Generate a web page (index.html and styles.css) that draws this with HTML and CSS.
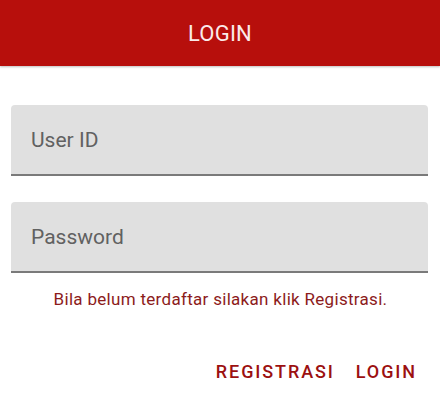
FILE: index.html
```html
<!DOCTYPE html>
<html>
<head>
<meta charset="utf-8">
<link rel="stylesheet" href="styles.css">
</head>
<body>
<div class="app">
  <header class="toolbar"><span class="title">LOGIN</span></header>
  <main class="content">
    <div class="field"><span class="placeholder">User ID</span></div>
    <div class="field"><span class="placeholder">Password</span></div>
    <p class="hint">Bila belum terdaftar silakan klik Registrasi.</p>
    <div class="actions">
      <button class="btn">REGISTRASI</button>
      <button class="btn">LOGIN</button>
    </div>
  </main>
</div>
</body>
</html>
```
FILE: styles.css
```css
* { box-sizing: border-box; }
html, body { margin: 0; padding: 0; background: #fff; }
body { font-family: Roboto, "Noto Sans", sans-serif; width: 440px; height: 403px; overflow: hidden; }
.toolbar {
  height: 66px;
  background: #b70f0c;
  display: flex;
  align-items: center;
  justify-content: center;
  box-shadow: 0 1px 2px rgba(0,0,0,0.25);
}
.title { color: #fbeaea; font-size: 22px; font-weight: 400; letter-spacing: 0.2px; }
.content { padding: 39px 12px 0 11px; display: flex; flex-direction: column; }
.field {
  height: 71px;
  background: #e0e0e0;
  border-radius: 4px 4px 0 0;
  border-bottom: 2px solid #7a7a7a;
  display: flex;
  align-items: center;
  padding-left: 20px;
}
.field + .field { margin-top: 26px; }
.placeholder { color: #616161; font-size: 21px; }
.hint {
  margin: 16px 0 0;
  text-align: center;
  color: #8c1b1b;
  font-size: 17px;
  letter-spacing: 0.3px;
  padding-left: 2px;
}
.actions {
  margin-top: 52px;
  display: flex;
  justify-content: flex-end;
  gap: 21px;
  padding-right: 11px;
}
.btn {
  background: none;
  border: none;
  padding: 0;
  font-family: Roboto, sans-serif;
  font-size: 18px;
  font-weight: 500;
  letter-spacing: 1.9px;
  color: #9c1010;
}
```
